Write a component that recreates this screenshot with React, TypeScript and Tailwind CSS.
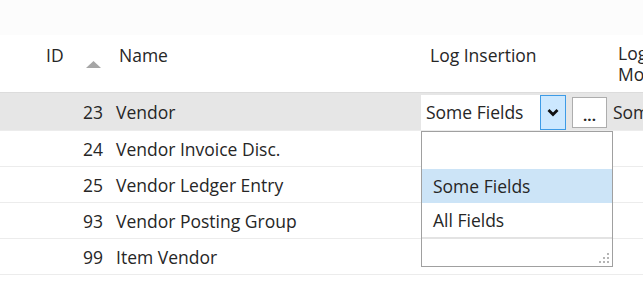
import React from 'react';

const rows = [
  { id: 24, name: 'Vendor Invoice Disc.' },
  { id: 25, name: 'Vendor Ledger Entry' },
  { id: 93, name: 'Vendor Posting Group' },
  { id: 99, name: 'Item Vendor' },
];

const font = { fontFamily: '"Segoe UI", "Open Sans", sans-serif' };

const App = () => {
  return (
    <div className="w-[643px] h-[281px] overflow-hidden bg-white text-[17.5px] leading-[24px] text-[#262626]" style={font}>
      <div className="h-[35px] bg-[#fcfcfc]" />

      {/* header */}
      <div className="flex h-[58px] border-b border-[#dcdcdc]">
        <div className="w-[105px] shrink-0 flex items-start pt-[8px] pl-[46px]">
          <span>ID</span>
          <svg className="ml-[22px] mt-[18px]" width="15" height="7" viewBox="0 0 15 7">
            <polygon points="7.5,0 15,7 0,7" fill="#a6a6a6" />
          </svg>
        </div>
        <div className="w-[316px] shrink-0 pt-[8px] pl-[14px]">Name</div>
        <div className="w-[192px] shrink-0 pt-[8px] pl-[9px]">Log Insertion</div>
        <div className="flex-1 pt-[8px] pl-[5px] leading-[21px] whitespace-nowrap overflow-hidden">
          Log
          <br />
          Modification
        </div>
      </div>

      {/* selected row */}
      <div className="relative flex h-[37px] bg-[#e6e6e6] items-center">
        <div className="w-[105px] shrink-0 text-right pr-[2px]">23</div>
        <div className="w-[316px] shrink-0 pl-[11px]">Vendor</div>
        <div className="w-[192px] shrink-0 flex items-center h-full">
          <div className="flex items-center bg-white w-[145px] h-[35px] mt-[1px]">
            <span className="flex-1 pl-[5px]">Some Fields</span>
            <span className="w-[26px] h-[35px] bg-[#cce8ff] border border-[#3d9be6] flex items-center justify-center">
              <svg width="12" height="9" viewBox="0 0 12 9">
                <polyline points="1.5,2 6,6.5 10.5,2" fill="none" stroke="#111" strokeWidth="2.8" />
              </svg>
            </span>
          </div>
          <span className="ml-[6px] w-[35px] h-[31px] mt-[1px] bg-white border border-[#adadad] flex items-end justify-center pb-[4px] text-[15px] font-bold leading-none">
            ...
          </span>
        </div>
        <div className="flex-1 whitespace-nowrap overflow-hidden">Some Fields</div>

        {/* dropdown list */}
        <div className="absolute left-[421px] top-[38px] w-[192px] h-[136px] bg-white border border-[#a0a0a0] flex flex-col z-10">
          <div className="h-[37px]" />
          <div className="h-[34px] bg-[#cce4f7] flex items-center pl-[11px]">Some Fields</div>
          <div className="h-[34px] flex items-center pl-[11px]">All Fields</div>
          <div className="flex-1 border-t-2 border-[#e3e3e3] relative">
            <svg className="absolute right-[3px] bottom-[3px]" width="10" height="10" viewBox="0 0 10 10" fill="#b5b5b5">
              <rect x="8" y="0" width="2" height="2" />
              <rect x="4" y="4" width="2" height="2" />
              <rect x="8" y="4" width="2" height="2" />
              <rect x="0" y="8" width="2" height="2" />
              <rect x="4" y="8" width="2" height="2" />
              <rect x="8" y="8" width="2" height="2" />
            </svg>
          </div>
        </div>
      </div>

      {rows.map((r) => (
        <div key={r.id} className="flex h-[36px] items-center border-t border-[#ececec]">
          <div className="w-[105px] shrink-0 text-right pr-[2px]">{r.id}</div>
          <div className="w-[316px] shrink-0 pl-[11px]">{r.name}</div>
          <div className="flex-1" />
        </div>
      ))}
      <div className="border-t border-[#ececec]" />
    </div>
  );
};

export default App;
